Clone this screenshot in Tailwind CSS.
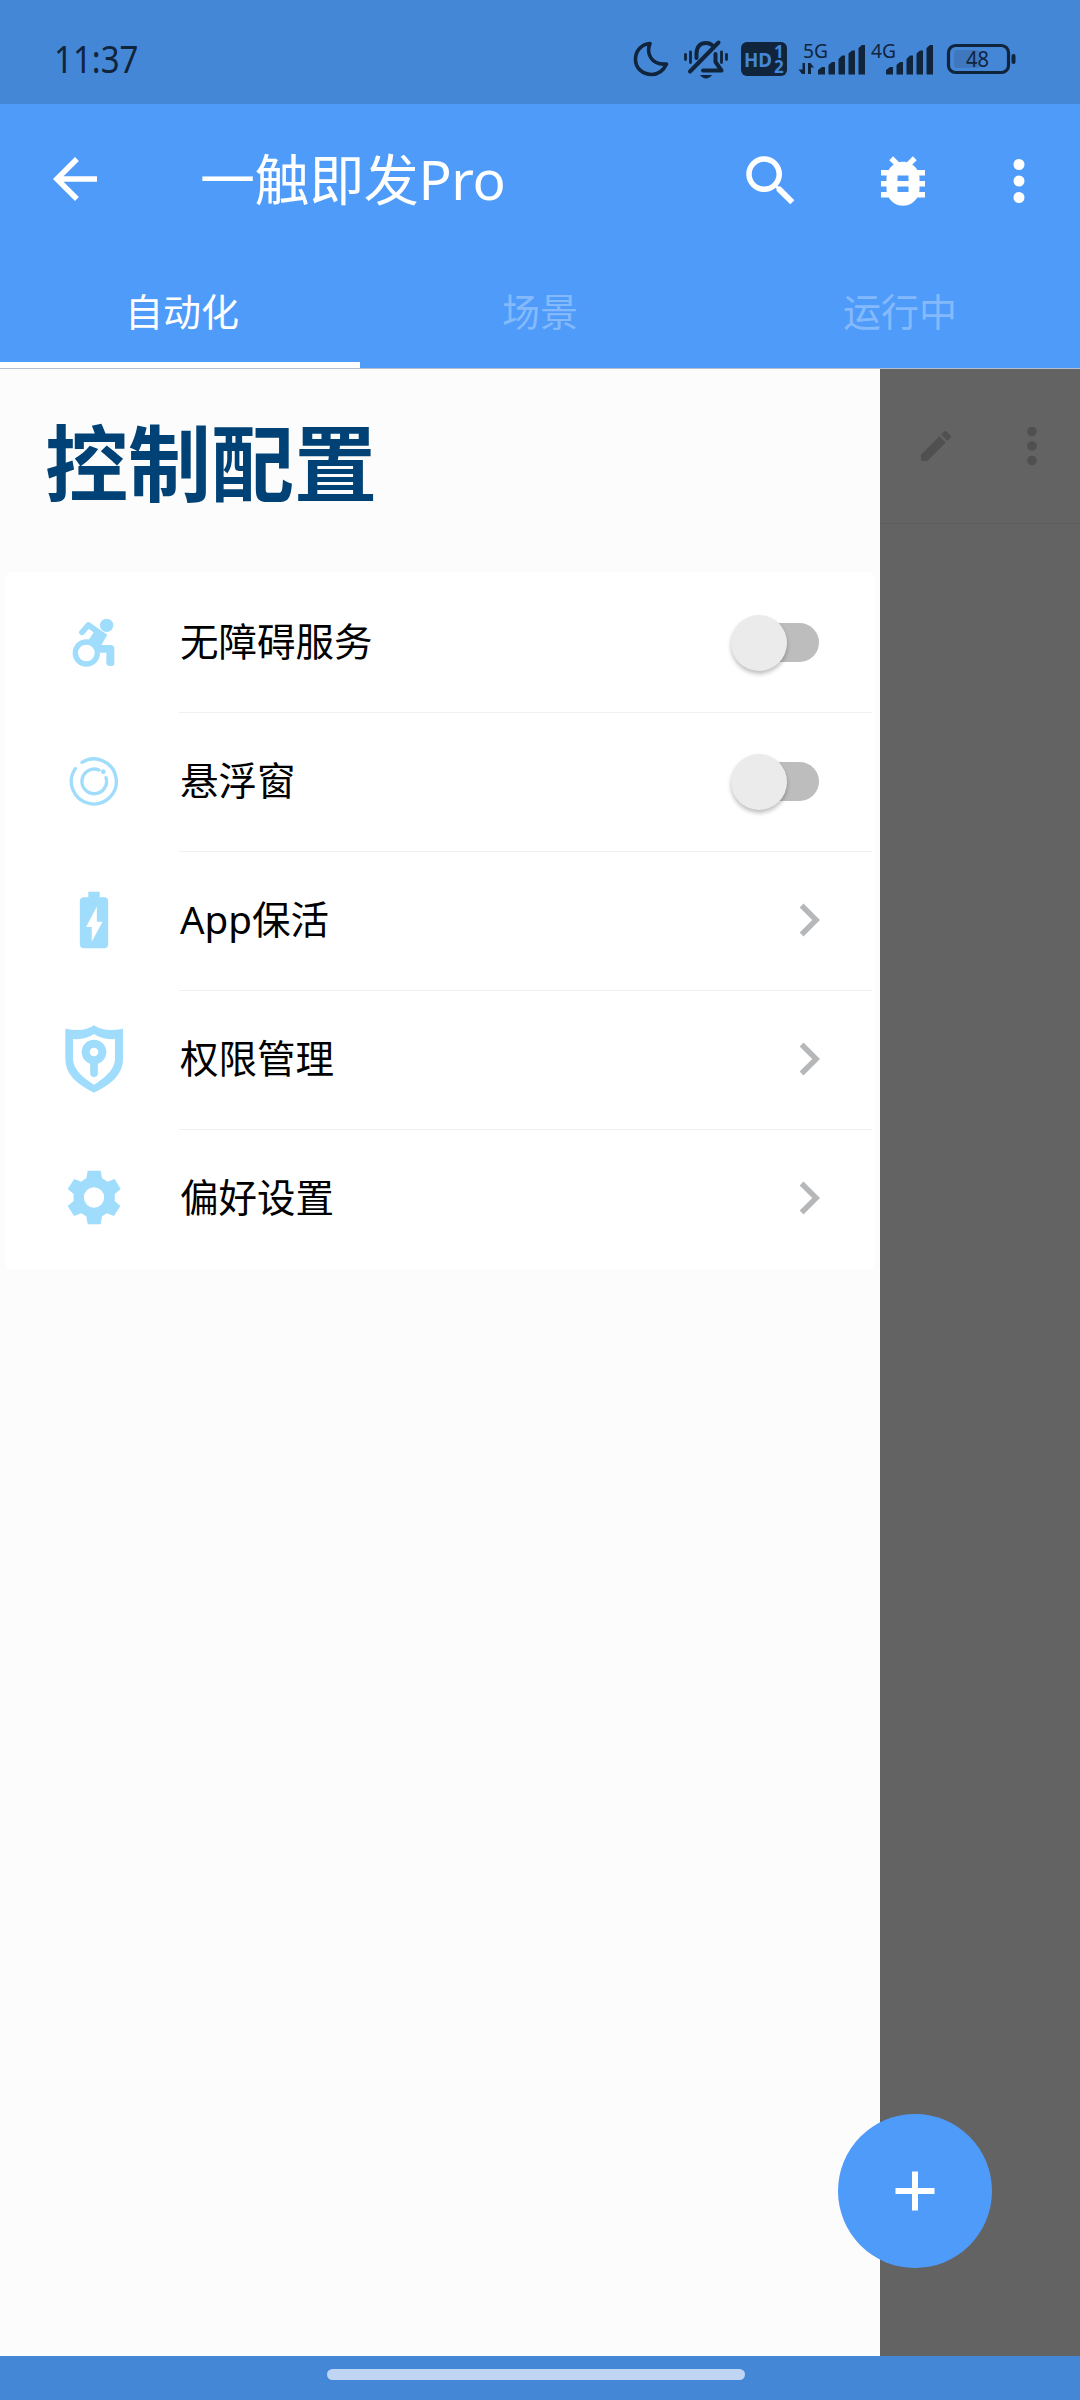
<!DOCTYPE html>
<html lang="zh-CN">
<head>
<meta charset="utf-8">
<title>一触即发Pro</title>
<script src="https://cdn.jsdelivr.net/npm/@tailwindcss/browser@4"></script>
</head>
<body class="w-[1080px] h-[2400px] overflow-hidden bg-[#fcfcfc] font-['Noto_Sans','Noto_Sans_CJK_SC',sans-serif] text-black">
<div class="relative flex h-[2400px] w-[1080px] flex-col">

  <!-- Status bar -->
  <div class="flex h-[104px] shrink-0 items-center justify-between bg-[#4587d7] pl-[54px] pr-[60px] pt-3.5 text-[#10243c]">
    <span class="mb-[3px] origin-left scale-x-[0.87] text-[38px] leading-none">11:37</span>
    <svg class="h-10 w-[388px] shrink-0 overflow-visible" viewBox="632 40 388 40" fill="none" stroke="#10243c" stroke-linecap="round" stroke-linejoin="round">
      <path d="M650 44.500C646 54 651 66.500 666.500 65C663.500 71.500 658 75.500 651.500 75.500C642.500 75.500 635.500 69 635.500 60.500C635.500 51.500 642 45 650 44.500Z" stroke-width="3.600"/>
      <g stroke-width="4">
        <path d="M690 72.500L718.500 43.500"/>
        <path d="M696.500 59V55C696.500 47.500 700.500 44 706 44C708.500 44 710.500 44.700 712 46" />
        <path d="M715.500 55V63L721.500 71.500H703"/>
        <path d="M685.500 55.500V60.500M690.500 53V63.500M721.500 53V63.500M726.500 55.500V60.500" stroke-width="2.800"/>
      </g>
      <path d="M700 76H712C709 80.500 703 80.500 700 76Z" fill="#10243c" stroke="none"/>
      <rect x="741" y="43" width="46" height="34" rx="6" fill="#10243c" stroke="none"/>
      <g fill="#4587d7" stroke="none" font-weight="700">
        <text x="744" y="67.500" font-size="20" textLength="28" lengthAdjust="spacingAndGlyphs">HD</text>
        <text x="774" y="59" font-size="17">1</text>
        <text x="774" y="73.500" font-size="17">2</text>
      </g>
      <g fill="#10243c" stroke="none">
        <text x="803" y="58.500" font-size="20" textLength="25" lengthAdjust="spacingAndGlyphs">5G</text>
        <text x="871" y="58.500" font-size="20" textLength="25" lengthAdjust="spacingAndGlyphs">4G</text>
        <path d="M802.500 64H805V75H802L798.500 70.500H802.500ZM808 64H810.500L814 68.500H811V75H808Z"/>
        <g id="bars">
          <path d="M818 75.500V71L822 68H825V75.500ZM828.500 75.500V66L832 63H835V75.500ZM838.500 75.500V60L842 56.500H845V75.500ZM848.500 75.500V54.500L852 51.500H855V75.500ZM858.500 75.500V49L862 46H865V75.500Z"/>
        </g>
        <use href="#bars" x="68"/>
      </g>
      <rect x="954" y="51" width="26" height="18" rx="3" fill="#3f78bf" stroke="none"/>
      <rect x="948.500" y="46.500" width="60" height="27" rx="7" stroke-width="3.200"/>
      <path d="M1013.500 57V63" stroke-width="4"/>
      <text x="966" y="67.500" font-size="22" textLength="23" lengthAdjust="spacingAndGlyphs" fill="#10243c" stroke="none">48</text>
    </svg>
  </div>

  <!-- App bar and tabs -->
  <header class="flex h-[265px] shrink-0 flex-col border-b border-[#b4bfcd] bg-[#4f9bfa] text-white">
    <div class="flex h-[154px] items-center pl-[42px] pr-7">
      <svg class="mb-1 size-[66px]" viewBox="0 0 24 24" fill="currentColor"><path d="M20 11H7.830l5.590-5.590L12 4l-8 8 8 8 1.410-1.410L7.830 13H20v-2z"/></svg>
      <h1 class="mb-[5px] ml-[92px] flex-1 text-[55px] leading-none tracking-[-0.4px]">一触即发Pro</h1>
      <svg class="mr-[66px] size-[66px]" viewBox="0 0 24 24" fill="currentColor"><path d="M15.500 14h-.790l-.280-.270A6.471 6.471 0 0 0 16 9.500 6.500 6.500 0 1 0 9.500 16c1.610 0 3.090-.590 4.230-1.570l.270.280v.790l5 4.990L20.490 19l-4.990-5zm-6 0C7.010 14 5 11.990 5 9.500S7.010 5 9.500 5 14 7.010 14 9.500 11.990 14 9.500 14z"/></svg>
      <svg class="mr-[50px] size-[66px]" viewBox="0 0 24 24" fill="currentColor"><path d="M20 8h-2.810c-.450-.780-1.070-1.450-1.820-1.960L17 4.410 15.590 3l-2.170 2.170C12.960 5.060 12.490 5 12 5s-.960.060-1.410.170L8.410 3 7 4.410l1.620 1.630C7.880 6.550 7.260 7.220 6.810 8H4v2h2.090c-.050.330-.090.660-.090 1v1H4v2h2v1c0 .340.040.670.090 1H4v2h2.810c1.040 1.790 2.970 3 5.190 3s4.150-1.210 5.190-3H20v-2h-2.090c.050-.330.090-.660.090-1v-1h2v-2h-2v-1c0-.340-.040-.670-.090-1H20V8zm-6 8h-4v-2h4v2zm0-4h-4v-2h4v2z"/></svg>
      <svg class="size-[66px]" viewBox="0 0 24 24" fill="currentColor"><circle cx="12" cy="6" r="2"/><circle cx="12" cy="12" r="2"/><circle cx="12" cy="18" r="2"/></svg>
    </div>
    <nav class="grid h-[110px] grid-cols-3 text-[38px] leading-none">
      <div class="flex items-center justify-center border-b-[6px] border-white pl-1 pt-0.5">自动化</div>
      <div class="flex items-center justify-center pb-1 text-[#84b9fc]">场景</div>
      <div class="flex items-center justify-center pb-1 text-[#84b9fc]">运行中</div>
    </nav>
  </header>

  <!-- Drawer over dimmed page -->
  <main class="flex flex-1">
    <section class="w-[880px] bg-[#fcfcfc]">
      <h2 class="flex h-[203px] items-center pb-4 pl-[45px] text-[83px] font-bold leading-none text-[#004275]">控制配置</h2>
      <div class="mx-1.5 rounded-md bg-white py-0.5 text-[38.500px] leading-none">
        <div class="flex h-[139px]">
          <div class="flex w-[173px] shrink-0 items-center justify-center pb-[3px] pl-0.5">
            <svg class="h-[50px] w-11" viewBox="212 711 132 150" fill="#a0dcfb">
              <circle cx="316" cy="736" r="20"/>
              <circle cx="255" cy="819" r="33" fill="none" stroke="#a0dcfb" stroke-width="16"/>
              <path d="M242 757L261 735L290 756" fill="none" stroke="#a0dcfb" stroke-width="17" stroke-linecap="round" stroke-linejoin="round"/>
              <path d="M265 728L318 764L300 795H330Q339 797 339 806V852Q338 858 328 858Q315 858 315 850V818H294Q290 790 262 780L277 757L258 742Z"/>
            </svg>
          </div>
          <div class="mr-0.5 flex flex-1 items-center justify-between border-b border-[#f0f0f0] pb-[3px] pl-px pr-[53px]">
            <span>无障碍服务</span>
            <span class="mt-0.5 flex h-[39px] w-[86px] items-center rounded-full bg-[#bdbdbd]"><span class="-ml-0.5 size-14 shrink-0 rounded-full bg-[#ebebeb] shadow-[0_3px_4px_rgba(0,0,0,0.25)]"></span></span>
          </div>
        </div>
        <div class="flex h-[139px]">
          <div class="flex w-[173px] shrink-0 items-center justify-center pb-[3px] pl-0.5">
            <svg class="size-[50px]" viewBox="85 109 150 150" fill="none" stroke="#a0dcfb" stroke-width="10" stroke-linecap="round">
              <path d="M124 128A67.500 67.500 0 1 1 104 147"/>
              <path d="M175 151A37 37 0 1 0 196 174"/>
              <circle cx="188" cy="156" r="7" fill="#a0dcfb" stroke="none"/>
            </svg>
          </div>
          <div class="mr-0.5 flex flex-1 items-center justify-between border-b border-[#f0f0f0] pb-[3px] pl-px pr-[53px]">
            <span>悬浮窗</span>
            <span class="mt-0.5 flex h-[39px] w-[86px] items-center rounded-full bg-[#bdbdbd]"><span class="-ml-0.5 size-14 shrink-0 rounded-full bg-[#ebebeb] shadow-[0_3px_4px_rgba(0,0,0,0.25)]"></span></span>
          </div>
        </div>
        <div class="flex h-[139px]">
          <div class="flex w-[173px] shrink-0 items-center justify-center pb-[3px] pl-0.5">
            <svg class="size-[68px]" viewBox="0 0 24 24" fill="#a0dcfb"><path d="M15.670 4H14V2h-4v2H8.330C7.600 4 7 4.600 7 5.330v15.330C7 21.400 7.600 22 8.330 22h7.330c.740 0 1.340-.600 1.340-1.330V5.330C17 4.600 16.400 4 15.670 4zM11.200 19.700V14.500H9.200L13 7.200V12.600H15L11.200 19.700z"/></svg>
          </div>
          <div class="mr-0.5 flex flex-1 items-center justify-between border-b border-[#f0f0f0] pb-[3px] pl-px pr-[30px]">
            <span>App保活</span>
            <svg class="size-[66px]" viewBox="0 0 24 24" fill="#b5b7b9"><path d="M10 6L8.590 7.410 13.170 12l-4.580 4.590L10 18l6-6z"/></svg>
          </div>
        </div>
        <div class="flex h-[139px]">
          <div class="flex w-[173px] shrink-0 items-center justify-center pb-[3px] pl-0.5">
            <svg class="h-[68px] w-[58px]" viewBox="73 137 174 204" fill="#a0dcfb">
              <path fill-rule="evenodd" d="M160 138Q190 160 247 148V240Q247 300 160 340Q74 300 74 240V148Q130 160 160 138ZM160 164Q135 182 97 179V240Q99 280 160 316Q221 280 223 240V179Q185 182 160 164Z"/>
              <circle cx="160" cy="218" r="25" fill="none" stroke="#a0dcfb" stroke-width="24"/>
              <path d="M160 248V282" stroke="#a0dcfb" stroke-width="23" stroke-linecap="round"/>
            </svg>
          </div>
          <div class="mr-0.5 flex flex-1 items-center justify-between border-b border-[#f0f0f0] pb-[3px] pl-px pr-[30px]">
            <span>权限管理</span>
            <svg class="size-[66px]" viewBox="0 0 24 24" fill="#b5b7b9"><path d="M10 6L8.590 7.410 13.170 12l-4.580 4.590L10 18l6-6z"/></svg>
          </div>
        </div>
        <div class="flex h-[138px]">
          <div class="flex w-[173px] shrink-0 items-center justify-center pb-[3px] pl-0.5">
            <svg class="h-[55px] w-[54px]" viewBox="79 573 162 165" fill="#a0dcfb">
              <path fill-rule="evenodd" d="M141 575H180L184 598Q192 602 200 608L222 600L240 630L222 645Q223 655 222 666L239 681L220 711L198 703Q192 708 184 712L180 736H141L137 712Q129 708 122 703L100 711L81 681L99 666Q98 655 99 645L81 630L101 600L122 608Q129 602 137 598ZM160 625A30 30 0 1 0 160 686A30 30 0 1 0 160 625Z"/>
            </svg>
          </div>
          <div class="mr-0.5 flex flex-1 items-center justify-between pb-[3px] pl-px pr-[30px]">
            <span>偏好设置</span>
            <svg class="size-[66px]" viewBox="0 0 24 24" fill="#b5b7b9"><path d="M10 6L8.590 7.410 13.170 12l-4.580 4.590L10 18l6-6z"/></svg>
          </div>
        </div>
      </div>
    </section>
    <aside class="flex-1 bg-[#636363]">
      <div class="flex h-[155px] items-center border-b border-[#5d5d5d] pl-9 text-[#505050]">
        <svg class="size-10" viewBox="0 0 24 24" fill="currentColor"><path d="M3 17.250V21h3.750L17.810 9.940l-3.750-3.750L3 17.250zM20.710 7.040a.996.996 0 0 0 0-1.410l-2.340-2.340a.996.996 0 0 0-1.410 0l-1.830 1.830 3.750 3.750 1.830-1.830z"/></svg>
        <svg class="ml-[47px] size-[58px] shrink-0" viewBox="0 0 24 24" fill="currentColor"><circle cx="12" cy="6" r="2"/><circle cx="12" cy="12" r="2"/><circle cx="12" cy="18" r="2"/></svg>
      </div>
    </aside>
  </main>

  <!-- Navigation bar -->
  <footer class="flex h-11 shrink-0 justify-center bg-[#4587d7] pt-[13px]">
    <div class="mr-2 h-[11px] w-[418px] rounded-full bg-[#bfd5f3]"></div>
  </footer>

  <!-- Floating action button -->
  <div class="absolute left-[838px] top-[2114px] flex size-[154px] items-center justify-center rounded-full bg-[#4f9bfa]">
    <svg class="size-10" viewBox="0 0 40 40" stroke="#fff" stroke-width="6"><path d="M20 0.500V39.500M0.500 20H39.500"/></svg>
  </div>
</div>
</body>
</html>
